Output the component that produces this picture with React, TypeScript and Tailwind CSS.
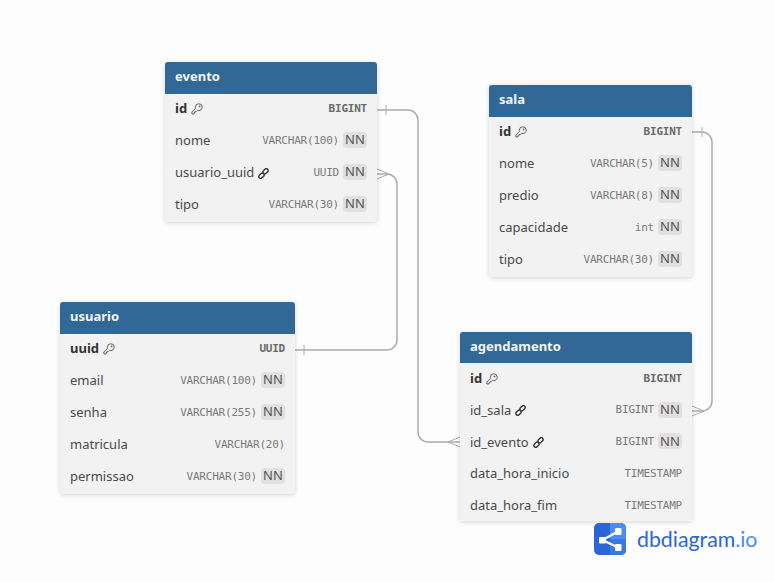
import React from "react";

type Col = { name: string; type: string; nn?: boolean; pk?: boolean; fk?: boolean };

const KeyIcon = () => (
  <svg width="12" height="12" viewBox="0 0 12 12" fill="none" stroke="#555" strokeWidth="0.9" className="ml-1 shrink-0">
    <path d="M7.8 0.8a3.4 3.4 0 0 1 3.4 3.4c0 1.9-1.5 3.4-3.4 3.4-.5 0-.9-.1-1.3-.3L5.2 8.6H4v1.2H2.9V11H0.9V9l3.6-3.7a3 3 0 0 1-.1-1 3.4 3.4 0 0 1 3.4-3.5z" />
    <circle cx="8.6" cy="3.4" r=".5" fill="#555" />
  </svg>
);

const LinkIcon = () => (
  <svg width="11" height="11" viewBox="0 0 12 12" fill="none" stroke="#333" strokeWidth="1.5" className="ml-1 shrink-0">
    <rect x="5" y="1.6" width="6.4" height="4" rx="2" transform="rotate(-45 8.2 3.6)" />
    <rect x="0.6" y="6.4" width="6.4" height="4" rx="2" transform="rotate(-45 3.8 8.4)" />
  </svg>
);

function Row({ col, rowClass }: { col: Col; rowClass: string }) {
  return (
    <div className={"flex items-center px-[10px] shrink-0 " + rowClass}>
      <span className={col.pk ? "text-[13px] font-bold text-[#333]" : "text-[13px] text-[#4a4a4a]"}>{col.name}</span>
      {col.pk && <KeyIcon />}
      {col.fk && <LinkIcon />}
      <span
        className={
          col.pk
            ? "ml-auto font-['DejaVu_Sans_Mono',monospace] text-[11px] tracking-[-0.22px] font-bold text-[#6a6a6a]"
            : "ml-auto font-['DejaVu_Sans_Mono',monospace] text-[11px] tracking-[-0.22px] text-[#7a7a7a]"
        }
      >
        {col.type}
      </span>
      {col.nn && (
        <span className="ml-1 mb-[2px] w-6 h-4 flex items-center justify-center bg-[#e0e0e0] rounded-sm text-[13px] text-[#555]">
          NN
        </span>
      )}
    </div>
  );
}

function Table({
  title,
  cols,
  className,
  headClass = "h-8",
  rowClass = "h-8 pb-0.5",
}: {
  title: string;
  cols: Col[];
  className: string;
  headClass?: string;
  rowClass?: string;
}) {
  return (
    <div className={"absolute bg-[#f2f2f2] rounded-t-[3px] shadow-[0_1px_5px_rgba(0,0,0,0.16)] overflow-hidden flex flex-col " + className}>
      <div className={"shrink-0 bg-[#316896] flex items-center px-[10px] pb-0.5 text-[13px] font-bold text-[#f2f6fa] " + headClass}>{title}</div>
      {cols.map((c) => (
        <Row key={c.name} col={c} rowClass={rowClass} />
      ))}
    </div>
  );
}

const evento: Col[] = [
  { name: "id", type: "BIGINT", pk: true },
  { name: "nome", type: "VARCHAR(100)", nn: true },
  { name: "usuario_uuid", type: "UUID", nn: true, fk: true },
  { name: "tipo", type: "VARCHAR(30)", nn: true },
];
const sala: Col[] = [
  { name: "id", type: "BIGINT", pk: true },
  { name: "nome", type: "VARCHAR(5)", nn: true },
  { name: "predio", type: "VARCHAR(8)", nn: true },
  { name: "capacidade", type: "int", nn: true },
  { name: "tipo", type: "VARCHAR(30)", nn: true },
];
const usuario: Col[] = [
  { name: "uuid", type: "UUID", pk: true },
  { name: "email", type: "VARCHAR(100)", nn: true },
  { name: "senha", type: "VARCHAR(255)", nn: true },
  { name: "matricula", type: "VARCHAR(20)" },
  { name: "permissao", type: "VARCHAR(30)", nn: true },
];
const agendamento: Col[] = [
  { name: "id", type: "BIGINT", pk: true },
  { name: "id_sala", type: "BIGINT", nn: true, fk: true },
  { name: "id_evento", type: "BIGINT", nn: true, fk: true },
  { name: "data_hora_inicio", type: "TIMESTAMP" },
  { name: "data_hora_fim", type: "TIMESTAMP" },
];

// relationship lines between the tables
const Lines = () => (
  <svg width="774" height="582" className="absolute left-0 top-0" fill="none" stroke="#aaaab0" strokeWidth="1.5">
    <path d="M377 110H408a10 10 0 0 1 10 10V432a10 10 0 0 0 10 10H460" />
    <path d="M386 105v10" strokeWidth="1" />
    <path d="M460 437l-12 5 12 5" strokeWidth="1" />
    <path d="M377 174H387a10 10 0 0 1 10 10V340a10 10 0 0 1-10 10H295" />
    <path d="M377 169l12 5-12 5" strokeWidth="1" />
    <path d="M304 345v10" strokeWidth="1" />
    <path d="M692 132H702a10 10 0 0 1 10 10V401a10 10 0 0 1-10 10H692" />
    <path d="M702 127v10" strokeWidth="1" />
    <path d="M692 406l12 5-12 5" strokeWidth="1" />
  </svg>
);

const Logo = () => (
  <svg width="32" height="32" viewBox="0 0 32 32" className="shrink-0">
    <rect width="32" height="32" rx="5" fill="#2b66d9" />
    <path d="M16 0h11a5 5 0 0 1 5 5v22a5 5 0 0 1-5 5H16z" fill="#4a8cf0" />
    <path d="M16 16h16v11a5 5 0 0 1-5 5H16z" fill="#3a78e4" />
    <path d="M8.5 17L24 8.5M8.5 17L24 24.5" stroke="#fff" strokeWidth="2.4" />
    <rect x="5" y="14" width="7" height="6.5" rx="1.2" fill="#fff" />
    <rect x="21" y="5" width="6.5" height="7" rx="1.2" fill="#fff" />
    <rect x="21" y="21" width="6.5" height="7" rx="1.2" fill="#fff" />
  </svg>
);

export default function App() {
  return (
    <div className="relative w-[774px] h-[582px] overflow-hidden bg-[#fdfdfd] font-['Noto_Sans',sans-serif]">
      <Lines />
      <Table title="evento" cols={evento} className="left-[165px] top-[62px] w-[212px] rounded-b-[3px]" />
      <Table title="sala" cols={sala} className="left-[489px] top-[85px] w-[203px] rounded-b-[3px]" />
      <Table title="usuario" cols={usuario} className="left-[60px] top-[302px] w-[235px] rounded-b-[3px]" />
      <Table
        title="agendamento"
        cols={agendamento}
        className="left-[460px] top-[332px] w-[232px] h-[189px]"
        headClass="h-[31px]"
        rowClass="h-[31.75px]"
      />
      <div className="absolute left-[594px] top-[523px] flex items-center gap-[11px]">
        <Logo />
        <span className="text-[21.3px] leading-8 font-['Lato',sans-serif] text-[#2b66d9]">
          dbdiagram<span className="text-[#4a8cf0]">.io</span>
        </span>
      </div>
    </div>
  );
}
